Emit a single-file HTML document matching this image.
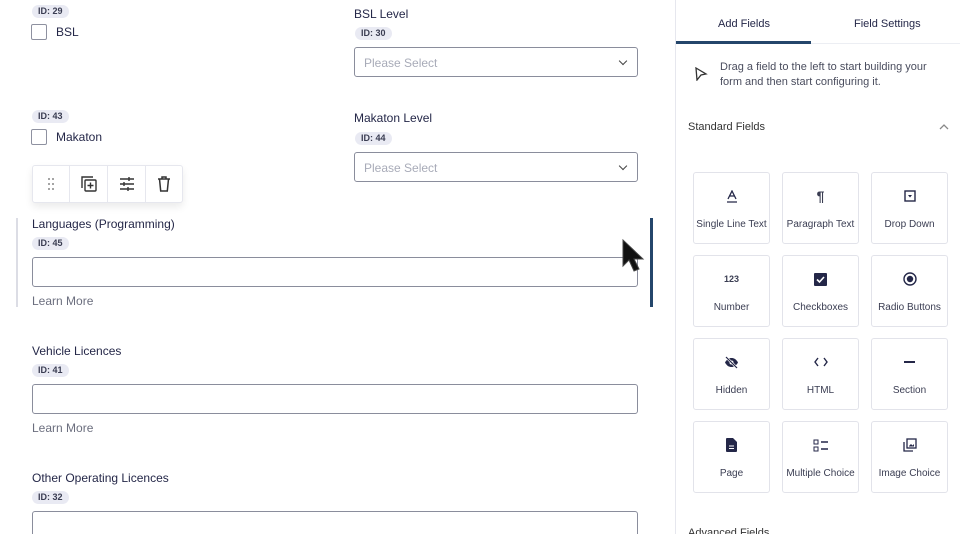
<!DOCTYPE html>
<html style="overflow:hidden;height:534px"><head><style>
*{box-sizing:border-box;margin:0;padding:0}
html,body{width:960px;height:534px;overflow:hidden}
body{background:#fff;font-family:"Liberation Sans",sans-serif;color:#242748;position:relative}
.a{position:absolute}
.badge{position:absolute;background:#e9eaf3;border-radius:8px;font-size:9px;font-weight:bold;color:#3a3d52;padding:2px 6px;height:13px;line-height:9px}
.lbl{position:absolute;font-size:12px;color:#242748}
.cb{position:absolute;width:16px;height:16px;border:1px solid #8e91a0;border-radius:2px}
.inp{position:absolute;border:1px solid #8a8d9c;border-radius:3px;background:#fff}
.sel{position:absolute;border:1px solid #8a8d9c;border-radius:3px;font-size:12px;color:#a8abb8;padding:8px 9px}
.sel:after{content:"";position:absolute;right:11px;top:10px;width:5px;height:5px;border-right:1.5px solid #444;border-bottom:1.5px solid #444;transform:rotate(45deg)}
.lm{position:absolute;font-size:12px;color:#6b6e7e}
.card{position:absolute;width:77px;height:72px;border:1px solid #e2e3ea;border-radius:3px;text-align:center;font-size:10px;color:#3a3d52}
.card .t{position:absolute;left:0;right:0;top:46px}
.card .i{position:absolute;left:0;right:0;top:15px;height:16px;display:flex;justify-content:center;align-items:center}
</style></head><body>
<div class="badge" style="left:32px;top:5px">ID: 29</div>
<div class="cb" style="left:31px;top:24px"></div>
<div class="lbl" style="left:56px;top:25px">BSL</div>
<div class="lbl" style="left:354px;top:7px">BSL Level</div>
<div class="badge" style="left:355px;top:27px">ID: 30</div>
<div class="sel" style="left:354px;top:47px;width:284px;height:30px">Please Select</div>

<div class="badge" style="left:32px;top:110px">ID: 43</div>
<div class="cb" style="left:31px;top:129px"></div>
<div class="lbl" style="left:56px;top:130px">Makaton</div>
<div class="lbl" style="left:354px;top:111px">Makaton Level</div>
<div class="badge" style="left:355px;top:132px">ID: 44</div>
<div class="sel" style="left:354px;top:152px;width:284px;height:30px">Please Select</div>

<div class="a" style="left:32px;top:165px;width:151px;height:38px;border:1px solid #e6e7ee;border-radius:3px;box-shadow:0 4px 8px rgba(0,0,0,.08);display:flex;background:#fff">
 <div style="width:37px;border-right:1px solid #e6e7ee;display:flex;align-items:center;justify-content:center"><svg width="8" height="14"><g fill="#888"><circle cx="2" cy="2" r="1"/><circle cx="6" cy="2" r="1"/><circle cx="2" cy="7" r="1"/><circle cx="6" cy="7" r="1"/><circle cx="2" cy="12" r="1"/><circle cx="6" cy="12" r="1"/></g></svg></div>
 <div style="width:38px;border-right:1px solid #e6e7ee;display:flex;align-items:center;justify-content:center"><svg width="18" height="18" fill="none" stroke="#333" stroke-width="1.4"><path d="M2 13V2h11"/><rect x="5" y="5" width="11" height="11" rx="1"/><path d="M10.5 7.5v6M7.5 10.5h6"/></svg></div>
 <div style="width:38px;border-right:1px solid #e6e7ee;display:flex;align-items:center;justify-content:center"><svg width="16" height="14" stroke="#333" stroke-width="1.4"><path d="M1 2h14M1 7h14M1 12h14"/><path d="M10 0v4M5 5v4M9 10v4"/></svg></div>
 <div style="flex:1;display:flex;align-items:center;justify-content:center"><svg width="14" height="16" fill="none" stroke="#333" stroke-width="1.5"><path d="M1 3h12M5 3V1h4v2M2.5 3l1.2 12h6.6l1.2-12"/></svg></div>
</div>

<div class="a" style="left:16px;top:218px;width:2px;height:89px;background:#dcdde5"></div>
<div class="a" style="left:650px;top:218px;width:3px;height:89px;background:#24466b"></div>
<div class="lbl" style="left:32px;top:217px">Languages (Programming)</div>
<div class="badge" style="left:32px;top:237px">ID: 45</div>
<div class="inp" style="left:32px;top:257px;width:606px;height:30px"></div>
<div class="lm" style="left:32px;top:294px">Learn More</div>
<svg class="a" style="left:620px;top:238px" width="28" height="40"><path d="M3 2v26l6-6 5 11 5-2-5-10h9z" fill="#111" stroke="#444" stroke-width="1"/></svg>

<div class="lbl" style="left:32px;top:344px">Vehicle Licences</div>
<div class="badge" style="left:32px;top:364px">ID: 41</div>
<div class="inp" style="left:32px;top:384px;width:606px;height:30px"></div>
<div class="lm" style="left:32px;top:421px">Learn More</div>
<div class="lbl" style="left:32px;top:471px">Other Operating Licences</div>
<div class="badge" style="left:32px;top:491px">ID: 32</div>
<div class="inp" style="left:32px;top:511px;width:606px;height:40px"></div>

<div class="a" style="left:675px;top:0;width:1px;height:534px;background:#e6e7ee"></div>
<div class="a" style="left:676px;top:43px;width:284px;height:1px;background:#eceef3"></div>
<div class="a" style="left:676px;top:41px;width:135px;height:3px;background:#24466b"></div>
<div class="lbl" style="left:718px;top:18px;font-size:11px">Add Fields</div>
<div class="lbl" style="left:854px;top:18px;font-size:11px">Field Settings</div>
<svg class="a" style="left:694px;top:67px" width="14" height="14" fill="none" stroke="#333" stroke-width="1.3"><path d="M2 1l10 6-5 1-4 5z"/></svg>
<div class="lbl" style="left:720px;top:60px;font-size:11px;line-height:15px;color:#4a4d5e;width:225px">Drag a field to the left to start building your form and then start configuring it.</div>
<div class="lbl" style="left:688px;top:121px;font-size:11px;color:#333">Standard Fields</div>
<svg class="a" style="left:939px;top:123px" width="10" height="7" fill="none" stroke="#888" stroke-width="1.3"><path d="M1 6l4-4 4 4"/></svg>

<div class="card" style="left:693px;top:172px"><div class="i"><svg width="12" height="13" fill="none" stroke="#242748" stroke-width="1.3"><path d="M2 9L6 1l4 8M3.5 6h5M1 12h10"/></svg></div><div class="t">Single Line Text</div></div>
<div class="card" style="left:782px;top:172px"><div class="i" style="font-weight:bold;font-size:14px">¶</div><div class="t">Paragraph Text</div></div>
<div class="card" style="left:871px;top:172px"><div class="i"><svg width="12" height="12"><rect x="1" y="1" width="10" height="10" fill="none" stroke="#242748" stroke-width="1.4"/><path d="M4 5h4l-2 2.5z" fill="#242748"/></svg></div><div class="t">Drop Down</div></div>
<div class="card" style="left:693px;top:255px"><div class="i" style="font-size:9px;font-weight:bold">123</div><div class="t">Number</div></div>
<div class="card" style="left:782px;top:255px"><div class="i"><svg width="13" height="13"><rect width="13" height="13" rx="1" fill="#242748"/><path d="M3 6.5l2.5 2.5 4.5-5" stroke="#fff" stroke-width="1.6" fill="none"/></svg></div><div class="t">Checkboxes</div></div>
<div class="card" style="left:871px;top:255px"><div class="i"><svg width="14" height="14"><circle cx="7" cy="7" r="6" fill="none" stroke="#242748" stroke-width="1.4"/><circle cx="7" cy="7" r="3.2" fill="#242748"/></svg></div><div class="t">Radio Buttons</div></div>
<div class="card" style="left:693px;top:338px"><div class="i"><svg width="15" height="13"><path d="M1 6.5C3 3 5 2 7.5 2S12 3 14 6.5C12 10 10 11 7.5 11S3 10 1 6.5z" fill="#242748"/><circle cx="7.5" cy="6.5" r="2" fill="#fff"/><path d="M2 1l11 11" stroke="#fff" stroke-width="2.4"/><path d="M2 1l11 11" stroke="#242748" stroke-width="1.2"/></svg></div><div class="t">Hidden</div></div>
<div class="card" style="left:782px;top:338px"><div class="i"><svg width="14" height="10" fill="none" stroke="#242748" stroke-width="1.4"><path d="M4 1L1 5l3 4M10 1l3 4-3 4"/></svg></div><div class="t">HTML</div></div>
<div class="card" style="left:871px;top:338px"><div class="i"><div style="width:11px;height:1.5px;background:#242748"></div></div><div class="t">Section</div></div>
<div class="card" style="left:693px;top:421px"><div class="i"><svg width="11" height="14"><path d="M0 1a1 1 0 011-1h6l4 4v9a1 1 0 01-1 1H1a1 1 0 01-1-1z" fill="#242748"/><path d="M3 8h5M3 10.5h5" stroke="#fff" stroke-width="1"/></svg></div><div class="t">Page</div></div>
<div class="card" style="left:782px;top:421px"><div class="i"><svg width="16" height="13" fill="none" stroke="#242748" stroke-width="1"><rect x="1" y="1" width="4" height="4"/><rect x="1" y="8" width="4" height="4"/><path d="M8 3h7M8 10h7" stroke-width="1.4"/></svg></div><div class="t">Multiple Choice</div></div>
<div class="card" style="left:871px;top:421px"><div class="i"><svg width="14" height="14" fill="none" stroke="#242748" stroke-width="1.3"><path d="M1 4v9h9"/><rect x="4" y="1" width="9" height="9"/><path d="M6 8l2-2 1.5 1.5L11 6v2.5H6z" fill="#242748" stroke="none"/></svg></div><div class="t">Image Choice</div></div>
<div class="lbl" style="left:688px;top:527px;font-size:11px;color:#333">Advanced Fields</div>
</body></html>
